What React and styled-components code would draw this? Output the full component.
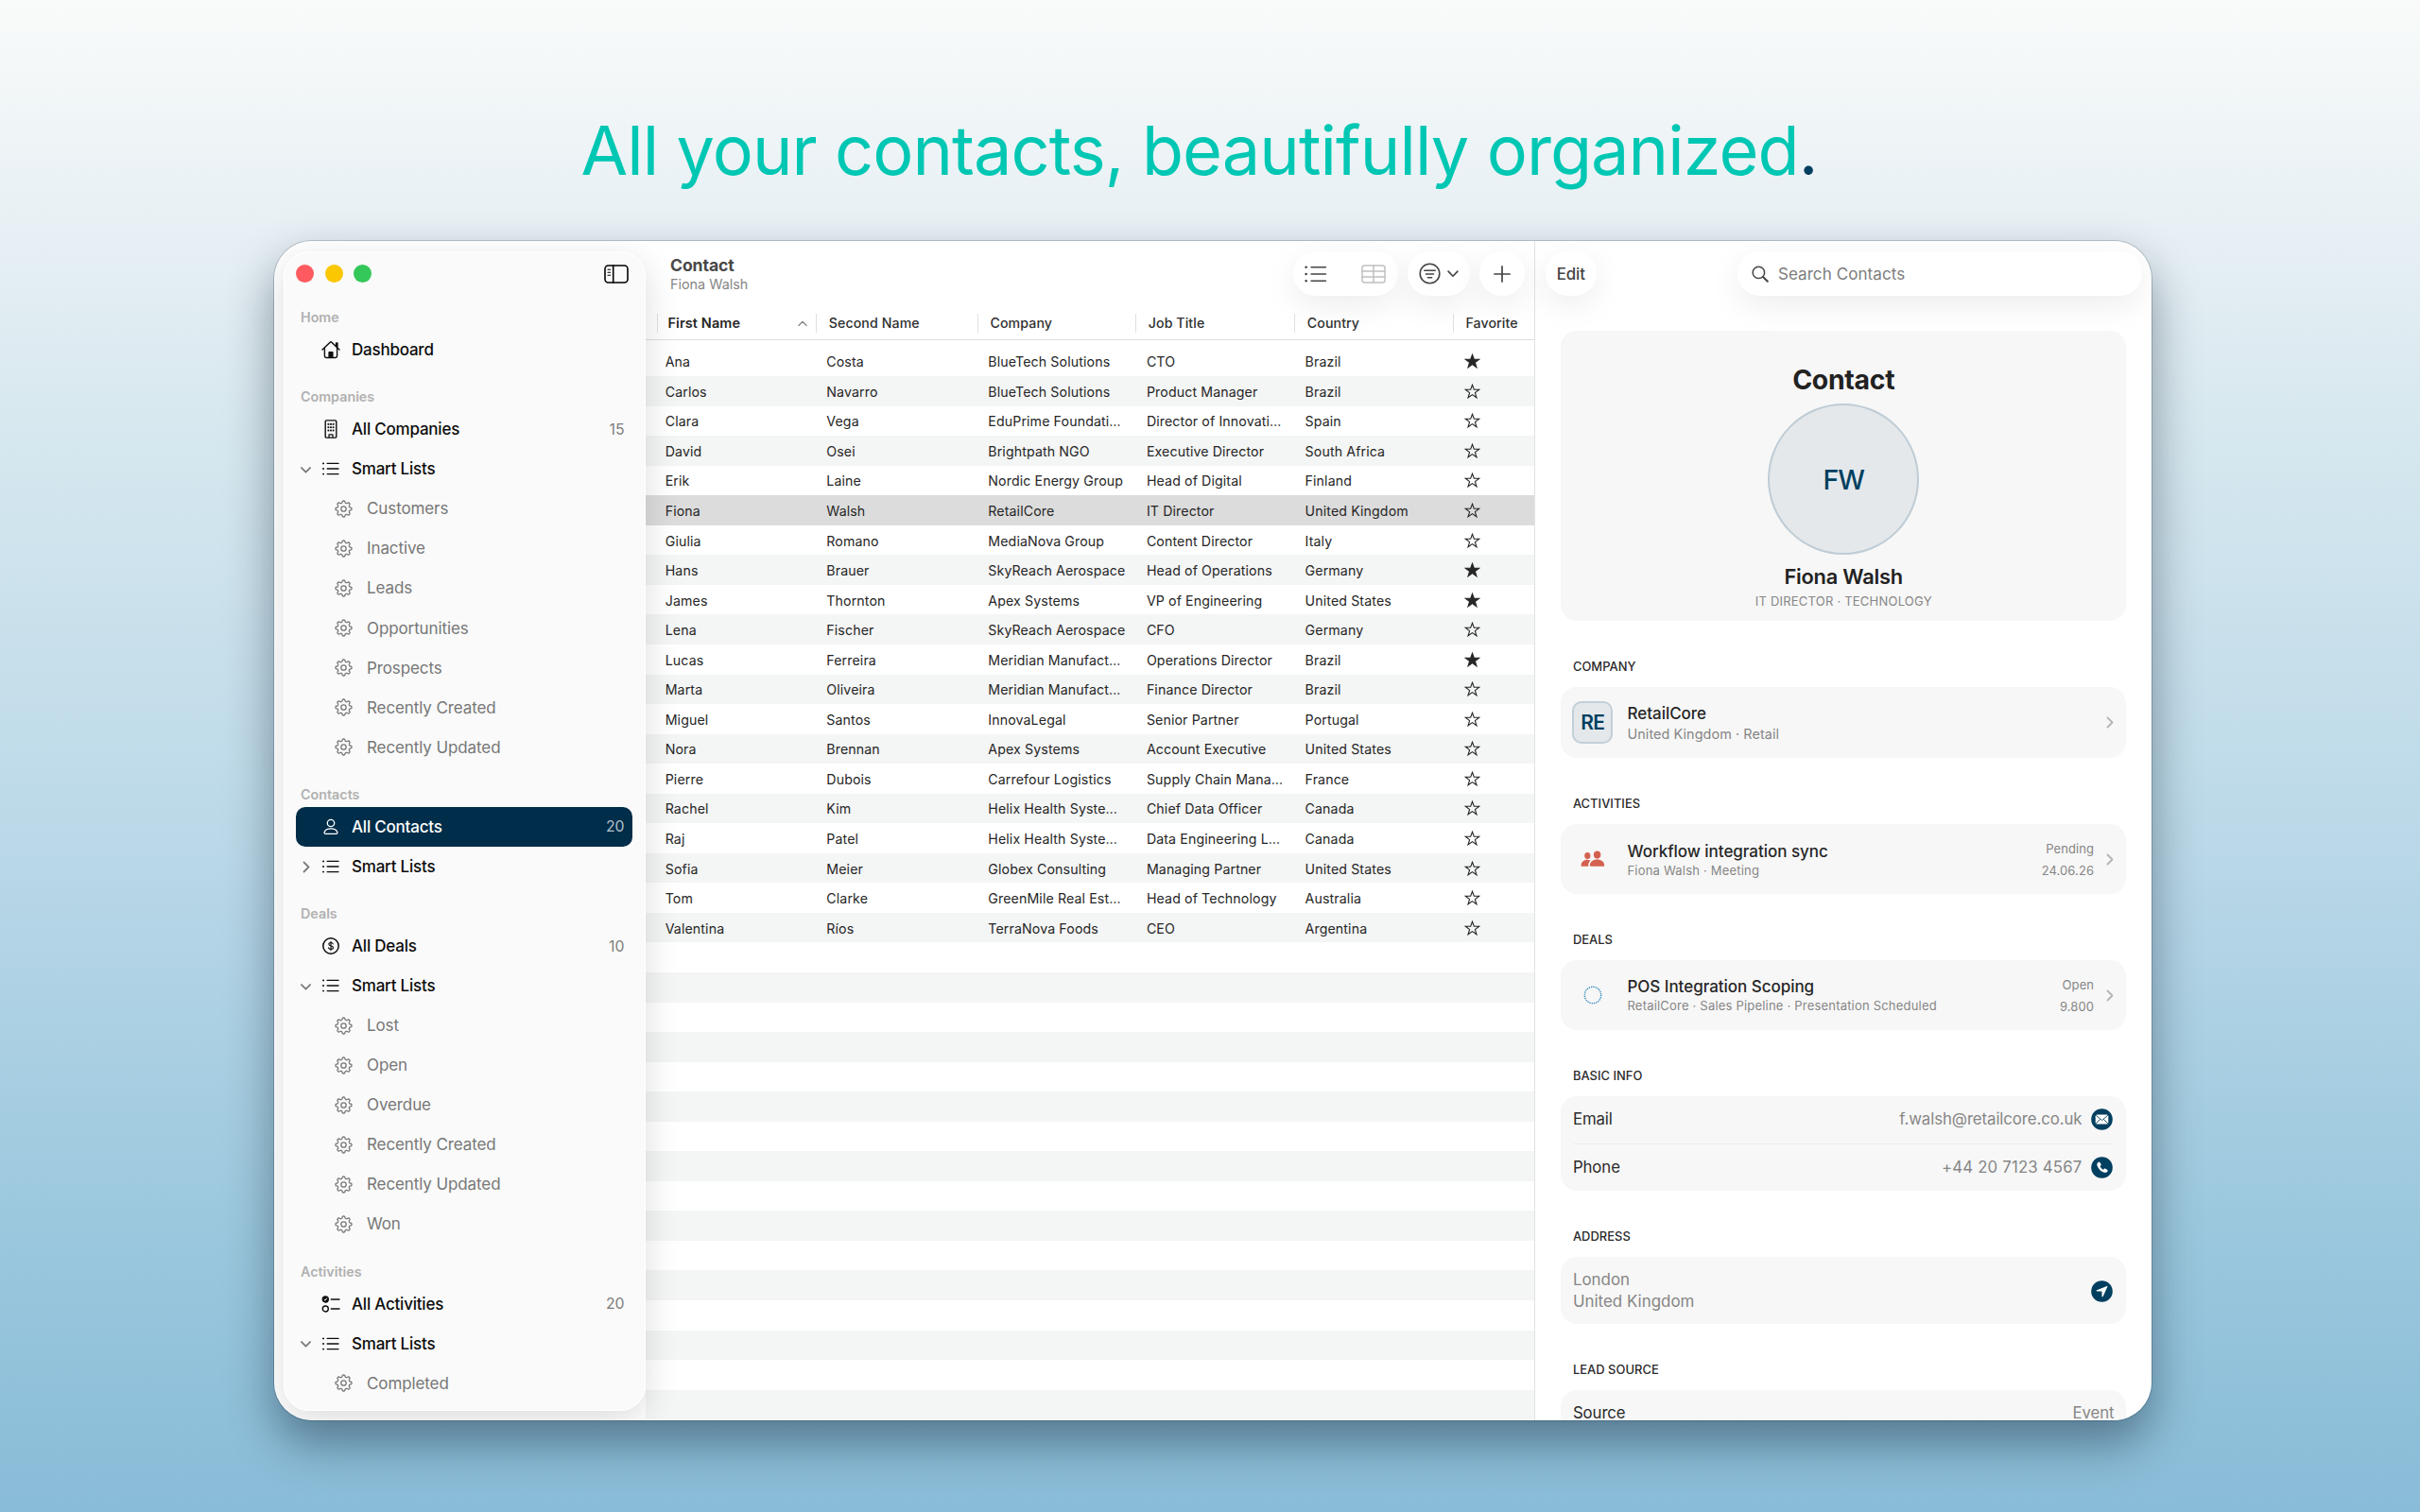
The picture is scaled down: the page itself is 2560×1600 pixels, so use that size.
import React from "react";
import styled, { createGlobalStyle, css } from "styled-components";

const GlobalStyle = createGlobalStyle`
  * {
    box-sizing: border-box;
  }
  body {
    margin: 0;
    font-family: Inter, "Liberation Sans", sans-serif;
  }
`;

const Page = styled.main`
  width: 2560px;
  height: 1600px;
  overflow: hidden;
  display: flex;
  flex-direction: column;
  align-items: center;
  background: linear-gradient(#f9fbfa 0%, #e6eff4 16%, #d7e8ef 28%, #bad8e8 56%, #9ac7dd 82%, #89bcd8 100%);
`;

const Headline = styled.h1`
  margin: 114px 23px 0 0;
  height: 141px;
  font-size: 72px;
  line-height: 90px;
  font-weight: 400;
  letter-spacing: -0.93px;
  white-space: nowrap;
  color: #00c7b3;
`;

const Dot = styled.span`
  color: #003f5f;
`;

const WindowShadow = styled.div`
  margin-left: 6px;
  border-radius: 40px;
  box-shadow: 0 0 0 1px rgba(0, 30, 50, 0.2), 0 24px 50px rgba(0, 20, 35, 0.42);
`;

const Window = styled.div`
  width: 1986px;
  height: 1248px;
  display: flex;
  overflow: hidden;
  border-radius: 40px;
  background: #fff;
`;

/* Sidebar */

const SidebarColumn = styled.aside`
  position: relative;
  z-index: 1;
  width: 393px;
  flex: none;
  padding: 11px 0 10px 10px;
`;

const SidebarPanel = styled.div`
  height: 100%;
  overflow: hidden;
  border: 1px solid #fff;
  border-radius: 27px;
  background: #fafafa;
  padding-right: 1px;
`;

const PanelShadow = styled.div`
  height: 100%;
  border-radius: 27px;
  box-shadow: 0 10px 36px rgba(0, 0, 0, 0.14);
`;

const TitleBar = styled.div`
  height: 40px;
  padding: 5px 16px 0 12.4px;
  display: flex;
  align-items: center;
  justify-content: space-between;
`;

const Lights = styled.div`
  display: flex;
  gap: 11.2px;
`;

const Light = styled.i`
  width: 19px;
  height: 19px;
  border-radius: 50%;
  background: ${(p) => p.$color};
`;

const SectionTitle = styled.div`
  height: 42.07px;
  padding: 17px 0 0 17px;
  font-size: 14.3px;
  line-height: 24px;
  font-weight: 600;
  color: #b1b1b1;
`;

const SideRow = styled.div`
  height: 42.07px;
  margin: 0 12px 0 11.6px;
  padding-left: ${(p) => (p.$nested ? 39.8 : 0)}px;
  padding-right: 8.5px;
  display: flex;
  align-items: center;
  border-radius: 10px;
  font-size: 17px;
  font-weight: ${(p) => (p.$nested ? 400 : 470)};
  letter-spacing: ${(p) => (p.$nested ? "-0.1px" : "-0.22px")};
  color: ${(p) => (p.$nested ? "#777" : "#0c0c0c")};
  ${(p) =>
    p.$active &&
    css`
      background: #002d49;
      color: #fff;
    `}
`;

const Disclosure = styled.span`
  width: 25px;
  height: 20px;
  padding: 2px 0 0 ${(p) => (p.$closed ? 7 : 5)}px;
  display: flex;
  align-items: center;
  color: #7d7d7d;
`;

const SideIcon = styled.span`
  width: ${(p) => (p.$nested ? 35.6 : 34.4)}px;
  display: flex;
  svg {
    margin-left: 2px;
  }
`;

const Count = styled.span`
  margin-left: auto;
  font-size: 15.8px;
  font-weight: 400;
  letter-spacing: 0;
  color: ${(p) => (p.$active ? "#b3c0c9" : "#7d7d7d")};
`;

/* Table */

const TablePane = styled.section`
  width: 941px;
  flex: none;
  border-right: 1.5px solid #e2e2e2;
`;

const Toolbar = styled.header`
  height: 69px;
  padding: 11px 10.4px 0 26px;
  display: flex;
  align-items: flex-start;
`;

const Titles = styled.div`
  margin-right: auto;
  padding-top: 3px;
`;

const Title = styled.div`
  font-size: 17.6px;
  line-height: 24px;
  font-weight: 700;
  letter-spacing: -0.1px;
  color: #484848;
`;

const Subtitle = styled.div`
  font-size: 14.4px;
  line-height: 15px;
  color: #868686;
`;

const Pill = styled.div`
  width: ${(p) => p.$width}px;
  height: 47px;
  margin-left: ${(p) => p.$gap || 0}px;
  padding: ${(p) => p.$pad || "0"};
  display: flex;
  align-items: center;
  justify-content: ${(p) => p.$justify || "center"};
  border-radius: 24px;
  background: #fff;
  box-shadow: 0 10px 34px rgba(0, 0, 0, 0.075);
  font-size: 16.8px;
  color: #444;
`;

const GreyIcon = styled.span`
  display: flex;
  color: #c0c0c0;
`;

const HeadRow = styled.div`
  height: 35.5px;
  padding: 7.5px 0 0 11.5px;
  display: grid;
  grid-template-columns: 168.6px 170.7px 167.3px 168px 167.7px 1fr;
  border-bottom: 1.5px solid #dedede;
`;

const HeadCell = styled.div`
  height: 20.5px;
  padding-left: ${(p) => (p.$sorted ? 11 : 12.7)}px;
  padding-right: 9px;
  display: flex;
  align-items: center;
  justify-content: space-between;
  border-left: 1.5px solid #e0e0e0;
  font-size: ${(p) => (p.$sorted ? 14.5 : 14.2)}px;
  font-weight: ${(p) => (p.$sorted ? 640 : 470)};
  letter-spacing: 0.08px;
  white-space: nowrap;
  color: ${(p) => (p.$sorted ? "#262626" : "#303030")};
`;

const SortArrow = styled.span`
  display: flex;
  transform: rotate(180deg);
  color: #8a8a8a;
`;

const Rows = styled.div`
  padding-top: 7px;
`;

const Row = styled.div`
  height: 31.55px;
  padding-left: 20.7px;
  display: grid;
  grid-template-columns: 170.6px 171px 167.6px 167.7px 168.2px 1fr;
  align-items: center;
  background: ${(p) => (p.$selected ? "#dcdcdc" : p.$striped ? "#f4f5f5" : "#fff")};
`;

const Cell = styled.div`
  padding-top: 1px;
  font-size: 14.2px;
  letter-spacing: 0.11px;
  white-space: nowrap;
  color: #262626;
  svg {
    display: block;
  }
`;

/* Detail */

const DetailPane = styled.section`
  flex: 1;
  padding: 11px 10px 0 11px;
`;

const DetailBar = styled.div`
  display: flex;
  justify-content: space-between;
  height: 84px;
`;

const EditText = styled.span`
  font-weight: 500;
  letter-spacing: -0.1px;
`;

const SearchText = styled.span`
  margin-left: 10px;
  font-size: 17px;
  letter-spacing: 0.08px;
  color: #7c7c7c;
`;

const DetailBody = styled.div`
  width: 598.6px;
  margin-left: 15.9px;
`;

const Card = styled.div`
  height: ${(p) => p.$height}px;
  padding: 0 13px;
  border-radius: 17px;
  background: #f7f7f7;
`;

const Hero = styled(Card)`
  padding-top: 34px;
  display: flex;
  flex-direction: column;
  align-items: center;
`;

const HeroTitle = styled.h2`
  margin: 0 0 8px;
  font-size: 28.4px;
  line-height: 35px;
  font-weight: 700;
  letter-spacing: -0.3px;
  color: #222;
`;

const Avatar = styled.div`
  width: 160px;
  height: 160px;
  display: flex;
  align-items: center;
  justify-content: center;
  border: 2px solid #bfccd5;
  border-radius: 50%;
  background: #e4e8eb;
  font-size: 28.6px;
  font-weight: 540;
  letter-spacing: -1px;
  color: #003f5f;
`;

const HeroName = styled.div`
  margin-top: 10px;
  font-size: 21.8px;
  line-height: 27px;
  font-weight: 600;
  letter-spacing: -0.2px;
  color: #222;
`;

const HeroRole = styled.div`
  margin-top: 3px;
  font-size: 13px;
  line-height: 18px;
  letter-spacing: 0.22px;
  color: #868686;
`;

const GroupLabel = styled.div`
  height: 70.1px;
  padding: 40px 0 0 13px;
  font-size: 12.9px;
  line-height: 17px;
  font-weight: 500;
  letter-spacing: 0.05px;
  color: #2a2a2a;
`;

const LinkCard = styled(Card)`
  padding-left: 12px;
  display: flex;
  align-items: center;
`;

const Lead = styled.div`
  width: 43.6px;
  height: 44.4px;
  margin-right: 15px;
  display: flex;
  align-items: center;
  justify-content: center;
  ${(p) =>
    p.$badge &&
    css`
      border: 2px solid #c3cfd7;
      border-radius: 10px;
      background: #e4e8eb;
      font-size: 21px;
      font-weight: 600;
      letter-spacing: -0.8px;
      color: #003f5f;
    `}
`;

const LinkText = styled.div`
  padding-top: 1.6px;
`;

const LinkTitle = styled.div`
  font-size: 17px;
  line-height: 22px;
  font-weight: 500;
  letter-spacing: -0.03px;
  color: #262626;
`;

const LinkSub = styled.div`
  font-size: ${(p) => (p.$small ? 13 : 14.4)}px;
  line-height: ${(p) => (p.$small ? 19 : 21)}px;
  letter-spacing: ${(p) => (p.$small ? 0.2 : 0.08)}px;
  color: #868686;
`;

const LinkMeta = styled.div`
  margin: 0 13.4px 0 auto;
  padding-top: 1.4px;
  text-align: right;
  font-size: 13px;
  line-height: 22.6px;
  letter-spacing: 0.1px;
  color: #868686;
`;

const Tail = styled.div`
  margin-left: ${(p) => (p.$alone ? "auto" : 0)};
  display: flex;
  color: #b4b4b4;
`;

const InfoRow = styled.div`
  height: 50px;
  padding-bottom: 2px;
  display: flex;
  align-items: center;
  justify-content: space-between;
  font-size: 16.8px;
  letter-spacing: -0.08px;
  color: #2a2a2a;
  & + & {
    padding-bottom: 1px;
    border-top: 1.5px solid #ececec;
  }
`;

const InfoValue = styled.span`
  padding-right: ${(p) => (p.$plain ? 0 : 1)}px;
  display: flex;
  align-items: center;
  gap: 10px;
  letter-spacing: ${(p) => (p.$digits ? 0.18 : -0.08)}px;
  color: #868686;
`;

const AddressCard = styled(Card)`
  padding-top: 1.4px;
  padding-right: 14px;
  display: flex;
  align-items: center;
  justify-content: space-between;
  font-size: 16.9px;
  line-height: 23.6px;
  letter-spacing: 0.02px;
  color: #868686;
`;

/* Icons */

const Svg = ({ w = 20, h = w, box = `0 0 ${w} ${h}`, sw = 1.6, children }) => (
  <svg
    width={w}
    height={h}
    viewBox={box}
    fill="none"
    stroke="currentColor"
    strokeWidth={sw}
    strokeLinecap="round"
    strokeLinejoin="round"
  >
    {children}
  </svg>
);

const ChevronDown = ({ w = 11, sw = 1.8 }) => (
  <Svg w={w} h={w * 0.64} box="0 0 11 7" sw={sw}>
    <path d="M1 1l4.500 4.700L10 1" />
  </Svg>
);

const ChevronRight = () => (
  <Svg w={8} h={13} sw={1.8}>
    <path d="M1.500 1.500l5 5-5 5" />
  </Svg>
);

const HomeIcon = () => (
  <Svg w={20} sw={1.4}>
    <path d="M1 10L9.2 2.2a1.2 1.2 0 0 1 1.6 0L19 10M15.6 6.400V3h1.300v4.600" />
    <path d="M3.400 8.200v8.600a1.700 1.700 0 0 0 1.700 1.700h9.800a1.700 1.700 0 0 0 1.700-1.700V8.200" />
    <path d="M8.100 18v-5.200h3.800V18z" fill="currentColor" />
  </Svg>
);

const BuildingIcon = () => (
  <Svg w={20} sw={1.4}>
    <rect x="4.200" y="0.900" width="11.600" height="18.200" rx="1.200" />
    <path d="M8 18.800v-2.900h4v2.900" strokeWidth="1.200" />
    <g fill="currentColor" stroke="none">
      {[4, 7.3, 10.6].map((y) =>
        [6.5, 9.1, 11.7].map((x) => <rect key={`${x}-${y}`} x={x} y={y} width="1.800" height="1.800" />)
      )}
    </g>
  </Svg>
);

const ListIcon = ({ w = 20, sw = 1.4 }) => (
  <Svg w={w} box="0 0 20 20" sw={sw}>
    <path d="M6.200 4.400h11.800M6.200 10h11.800M6.200 15.600h11.800" />
    <path d="M2 4.400h.1M2 10h.1M2 15.600h.1" strokeWidth="1.900" />
  </Svg>
);

const PersonIcon = () => (
  <Svg w={20} sw={1.3}>
    <circle cx="10" cy="6" r="3.700" />
    <path d="M4.600 17.400c-1.200 0-1.800-.7-1.400-1.900.8-2.200 3.500-3.600 6.800-3.600s6 1.400 6.800 3.600c.4 1.200-.2 1.900-1.400 1.900z" />
  </Svg>
);

const DollarIcon = () => (
  <Svg w={20} sw={1.5}>
    <circle cx="10" cy="10" r="8.200" />
    <path
      d="M12.300 7.900c-.2-.9-1.100-1.400-2.300-1.400s-2.200.6-2.200 1.600c0 2.400 4.700 1.100 4.700 3.700 0 1.100-1.100 1.700-2.500 1.700s-2.300-.6-2.500-1.600M10 5.300v9.400"
      strokeWidth="1.100"
    />
  </Svg>
);

const ChecklistIcon = () => (
  <Svg w={20} sw={1.4}>
    <circle cx="4.300" cy="5" r="3" fill="currentColor" />
    <path d="M3 5.200l1 1 1.700-2.300" stroke="#fff" strokeWidth="1" />
    <circle cx="4.300" cy="15" r="3" />
    <path d="M10.300 5h8.700M10.300 15h8.700" />
  </Svg>
);

// Eight-lobed outline, sampled around the circle
const gearPath = (() => {
  const pts = [];
  for (let i = 0; i < 96; i++) {
    const a = (i / 96) * Math.PI * 2;
    const r = 7.5 + 1.05 * Math.tanh(Math.cos(a * 8) * 2.2);
    pts.push(`${(9.5 + r * Math.sin(a)).toFixed(2)} ${(9.5 - r * Math.cos(a)).toFixed(2)}`);
  }
  return `M${pts.join("L")}z`;
})();

const GearIcon = () => (
  <Svg w={19} sw={1.3}>
    <path d={gearPath} />
    <circle cx="9.500" cy="9.500" r="2.700" />
  </Svg>
);

const SidebarIcon = () => (
  <Svg w={26} h={20} sw={1.6}>
    <rect x="1" y="1" width="24" height="18" rx="3.500" />
    <path d="M9.700 1v18" />
    <path d="M4 5.200h2.600M4 8.200h2.600M4 11.200h2.600" strokeWidth="1.100" />
  </Svg>
);

const TableIcon = () => (
  <Svg w={26} h={20} sw={1.5}>
    <rect x="1" y="1" width="24" height="18" rx="2.500" />
    <path d="M13 1v18M1 7h24M1 13h24" />
  </Svg>
);

const FilterIcon = () => (
  <Svg w={23} sw={1.6}>
    <circle cx="11.500" cy="11.500" r="10.300" />
    <path d="M5.800 8.200h11.400M7.500 12h8M9.400 15.800h4.200" />
  </Svg>
);

const PlusIcon = () => (
  <Svg w={18} sw={1.7}>
    <path d="M9 .9v16.200M.9 9h16.200" />
  </Svg>
);

const SearchIcon = () => (
  <Svg w={18} sw={1.5}>
    <circle cx="7.400" cy="7.400" r="6.200" />
    <path d="M12 12l4.800 4.800" strokeWidth="2" />
  </Svg>
);

const StarIcon = ({ filled }) => (
  <Svg w={17} sw={1.1}>
    <path
      d="M8.500 1.300l1.800 5h5.400l-4.300 3.300 1.600 5.200-4.500-3.200L4 14.800l1.600-5.200L1.300 6.300h5.400z"
      strokeLinejoin="miter"
      fill={filled ? "currentColor" : "none"}
    />
  </Svg>
);

const PeopleIcon = () => (
  <svg width="26" height="18" viewBox="0 0 26 18" fill="#d4614f">
    <ellipse cx="7.300" cy="5.400" rx="3.100" ry="3.500" />
    <path d="M.6 15.700c0-3.600 2.900-6 6.400-6 1.300 0 2.400.3 3.400.9-1.400 1.400-2.200 3.300-2.200 5.600v.5H1.700c-.8 0-1.100-.4-1.100-1z" />
    <ellipse cx="17.600" cy="4.600" rx="3.700" ry="4.100" />
    <path d="M9.900 15.700c0-3.800 3.300-6.200 7.600-6.200s7.700 2.400 7.700 6.200c0 .7-.4 1.100-1.200 1.100H11.100c-.8 0-1.200-.4-1.200-1.100z" />
  </svg>
);

const DottedIcon = () => (
  <svg width="20" height="20" viewBox="0 0 20 20" fill="none" stroke="#2f86bb" strokeWidth="1.400">
    <circle cx="10" cy="10" r="8.700" strokeDasharray="1.300 0.978" />
  </svg>
);

const Round = ({ children }) => (
  <svg width="23" height="23" viewBox="0 0 23 23">
    <circle cx="11.500" cy="11.500" r="11.300" fill="#003f5f" />
    {children}
  </svg>
);

const MailIcon = () => (
  <Round>
    <rect x="4.700" y="6.600" width="13.600" height="9.900" rx="1.600" fill="#fff" />
    <path
      d="M5.200 7.200l6.300 5.400 6.300-5.400M5.200 16l4.400-4.600M17.800 16l-4.400-4.600"
      fill="none"
      stroke="#003f5f"
      strokeWidth=".9"
    />
  </Round>
);

const PhoneIcon = () => (
  <Round>
    <path
      d="M7.200 6.200c.9-1 1.700-.9 2.300 0l1 1.500c.4.600.3 1.100-.1 1.600l-.6.700c-.2.300-.2.500 0 .8.700 1.100 1.500 1.900 2.600 2.600.3.200.5.200.8 0l.7-.6c.5-.4 1-.5 1.600-.1l1.500 1c.9.600 1 1.400 0 2.300-1 1-2.300 1.100-3.800.5-3-1.200-5.300-3.500-6.500-6.500-.6-1.500-.5-2.800.5-3.800z"
      fill="#fff"
    />
  </Round>
);

const LocateIcon = () => (
  <Round>
    <path
      d="M16.800 5.900c.4-.2.800.2.600.6l-4.700 10.400c-.3.700-1.200.6-1.200-.2v-4.900c0-.3-.1-.4-.4-.4H6.300c-.8 0-.9-.9-.2-1.200z"
      fill="#fff"
    />
  </Round>
);

/* Data */

const sections = [
  { title: "Home", icon: HomeIcon, label: "Dashboard" },
  {
    title: "Companies",
    icon: BuildingIcon,
    label: "All Companies",
    count: 15,
    open: true,
    lists: ["Customers", "Inactive", "Leads", "Opportunities", "Prospects", "Recently Created", "Recently Updated"],
  },
  { title: "Contacts", icon: PersonIcon, label: "All Contacts", count: 20, active: true, lists: [] },
  {
    title: "Deals",
    icon: DollarIcon,
    label: "All Deals",
    count: 10,
    open: true,
    lists: ["Lost", "Open", "Overdue", "Recently Created", "Recently Updated", "Won"],
  },
  { title: "Activities", icon: ChecklistIcon, label: "All Activities", count: 20, open: true, lists: ["Completed"] },
];

const contacts = [
  ["Ana", "Costa", "BlueTech Solutions", "CTO", "Brazil", true],
  ["Carlos", "Navarro", "BlueTech Solutions", "Product Manager", "Brazil"],
  ["Clara", "Vega", "EduPrime Foundati…", "Director of Innovati…", "Spain"],
  ["David", "Osei", "Brightpath NGO", "Executive Director", "South Africa"],
  ["Erik", "Laine", "Nordic Energy Group", "Head of Digital", "Finland"],
  ["Fiona", "Walsh", "RetailCore", "IT Director", "United Kingdom"],
  ["Giulia", "Romano", "MediaNova Group", "Content Director", "Italy"],
  ["Hans", "Brauer", "SkyReach Aerospace", "Head of Operations", "Germany", true],
  ["James", "Thornton", "Apex Systems", "VP of Engineering", "United States", true],
  ["Lena", "Fischer", "SkyReach Aerospace", "CFO", "Germany"],
  ["Lucas", "Ferreira", "Meridian Manufact…", "Operations Director", "Brazil", true],
  ["Marta", "Oliveira", "Meridian Manufact…", "Finance Director", "Brazil"],
  ["Miguel", "Santos", "InnovaLegal", "Senior Partner", "Portugal"],
  ["Nora", "Brennan", "Apex Systems", "Account Executive", "United States"],
  ["Pierre", "Dubois", "Carrefour Logistics", "Supply Chain Mana…", "France"],
  ["Rachel", "Kim", "Helix Health Syste…", "Chief Data Officer", "Canada"],
  ["Raj", "Patel", "Helix Health Syste…", "Data Engineering L…", "Canada"],
  ["Sofia", "Meier", "Globex Consulting", "Managing Partner", "United States"],
  ["Tom", "Clarke", "GreenMile Real Est…", "Head of Technology", "Australia"],
  ["Valentina", "Ríos", "TerraNova Foods", "CEO", "Argentina"],
];

const emptyRows = Array.from({ length: 16 }, (_, i) => contacts.length + i);

function SidebarSection({ title, icon: Icon, label, count, active, open, lists }) {
  return (
    <>
      <SectionTitle>{title}</SectionTitle>
      <SideRow $active={active}>
        <Disclosure />
        <SideIcon>
          <Icon />
        </SideIcon>
        {label}
        {count && <Count $active={active}>{count}</Count>}
      </SideRow>
      {lists && (
        <SideRow>
          <Disclosure $closed={!open}>{open ? <ChevronDown /> : <ChevronRight />}</Disclosure>
          <SideIcon>
            <ListIcon />
          </SideIcon>
          Smart Lists
        </SideRow>
      )}
      {lists &&
        lists.map((name) => (
          <SideRow key={name} $nested>
            <SideIcon $nested>
              <GearIcon />
            </SideIcon>
            {name}
          </SideRow>
        ))}
    </>
  );
}

function Sidebar() {
  return (
    <SidebarColumn>
      <PanelShadow>
        <SidebarPanel>
          <TitleBar>
            <Lights>
              <Light $color="#ff5a5f" />
              <Light $color="#fbc700" />
              <Light $color="#34c759" />
            </Lights>
            <SidebarIcon />
          </TitleBar>
          {sections.map((section) => (
            <SidebarSection key={section.title} {...section} />
          ))}
        </SidebarPanel>
      </PanelShadow>
    </SidebarColumn>
  );
}

function ContactTable() {
  return (
    <TablePane>
      <Toolbar>
        <Titles>
          <Title>Contact</Title>
          <Subtitle>Fiona Walsh</Subtitle>
        </Titles>
        <Pill $width={111} $justify="space-between" $pad="0 13px 0 11.5px">
          <ListIcon w={26} sw={1.25} />
          <GreyIcon>
            <TableIcon />
          </GreyIcon>
        </Pill>
        <Pill $width={66} $gap={10.4} $justify="space-between" $pad="0 12px">
          <FilterIcon />
          <ChevronDown w={12} sw={1.5} />
        </Pill>
        <Pill $width={47.6} $gap={10}>
          <PlusIcon />
        </Pill>
      </Toolbar>
      <HeadRow>
        <HeadCell $sorted>
          First Name
          <SortArrow>
            <ChevronDown w={10} sw={1.5} />
          </SortArrow>
        </HeadCell>
        <HeadCell>Second Name</HeadCell>
        <HeadCell>Company</HeadCell>
        <HeadCell>Job Title</HeadCell>
        <HeadCell>Country</HeadCell>
        <HeadCell>Favorite</HeadCell>
      </HeadRow>
      <Rows>
        {contacts.map(([first, last, company, job, country, favorite], i) => (
          <Row key={first} $striped={i % 2 === 1} $selected={first === "Fiona"}>
            <Cell>{first}</Cell>
            <Cell>{last}</Cell>
            <Cell>{company}</Cell>
            <Cell>{job}</Cell>
            <Cell>{country}</Cell>
            <Cell>
              <StarIcon filled={favorite} />
            </Cell>
          </Row>
        ))}
        {emptyRows.map((i) => (
          <Row key={i} $striped={i % 2 === 1} />
        ))}
      </Rows>
    </TablePane>
  );
}

function Detail() {
  return (
    <DetailPane>
      <DetailBar>
        <Pill $width={53.6}>
          <EditText>Edit</EditText>
        </Pill>
        <Pill $width={427.6} $justify="flex-start" $pad="0 14.5px">
          <SearchIcon />
          <SearchText>Search Contacts</SearchText>
        </Pill>
      </DetailBar>
      <DetailBody>
        <Hero $height={306.6}>
          <HeroTitle>Contact</HeroTitle>
          <Avatar>FW</Avatar>
          <HeroName>Fiona Walsh</HeroName>
          <HeroRole>IT DIRECTOR · TECHNOLOGY</HeroRole>
        </Hero>

        <GroupLabel>COMPANY</GroupLabel>
        <LinkCard $height={75.7}>
          <Lead $badge>RE</Lead>
          <LinkText>
            <LinkTitle>RetailCore</LinkTitle>
            <LinkSub>United Kingdom · Retail</LinkSub>
          </LinkText>
          <Tail $alone>
            <ChevronRight />
          </Tail>
        </LinkCard>

        <GroupLabel>ACTIVITIES</GroupLabel>
        <LinkCard $height={73.7}>
          <Lead>
            <PeopleIcon />
          </Lead>
          <LinkText>
            <LinkTitle>Workflow integration sync</LinkTitle>
            <LinkSub $small>Fiona Walsh · Meeting</LinkSub>
          </LinkText>
          <LinkMeta>
            <div>Pending</div>
            <div>24.06.26</div>
          </LinkMeta>
          <Tail>
            <ChevronRight />
          </Tail>
        </LinkCard>

        <GroupLabel>DEALS</GroupLabel>
        <LinkCard $height={73.7}>
          <Lead>
            <DottedIcon />
          </Lead>
          <LinkText>
            <LinkTitle>POS Integration Scoping</LinkTitle>
            <LinkSub $small>RetailCore · Sales Pipeline · Presentation Scheduled</LinkSub>
          </LinkText>
          <LinkMeta>
            <div>Open</div>
            <div>9.800</div>
          </LinkMeta>
          <Tail>
            <ChevronRight />
          </Tail>
        </LinkCard>

        <GroupLabel>BASIC INFO</GroupLabel>
        <Card $height={100}>
          <InfoRow>
            Email
            <InfoValue>
              f.walsh@retailcore.co.uk
              <MailIcon />
            </InfoValue>
          </InfoRow>
          <InfoRow>
            Phone
            <InfoValue $digits>
              +44 20 7123 4567
              <PhoneIcon />
            </InfoValue>
          </InfoRow>
        </Card>

        <GroupLabel>ADDRESS</GroupLabel>
        <AddressCard $height={70.7}>
          <div>
            London
            <br />
            United Kingdom
          </div>
          <LocateIcon />
        </AddressCard>

        <GroupLabel>LEAD SOURCE</GroupLabel>
        <Card $height={100}>
          <InfoRow>
            Source
            <InfoValue $plain>Event</InfoValue>
          </InfoRow>
        </Card>
      </DetailBody>
    </DetailPane>
  );
}

export default function App() {
  return (
    <>
      <GlobalStyle />
      <Page>
        <Headline>
          All your contacts, beautifully organized<Dot>.</Dot>
        </Headline>
        <WindowShadow>
          <Window>
            <Sidebar />
            <ContactTable />
            <Detail />
          </Window>
        </WindowShadow>
      </Page>
    </>
  );
}
